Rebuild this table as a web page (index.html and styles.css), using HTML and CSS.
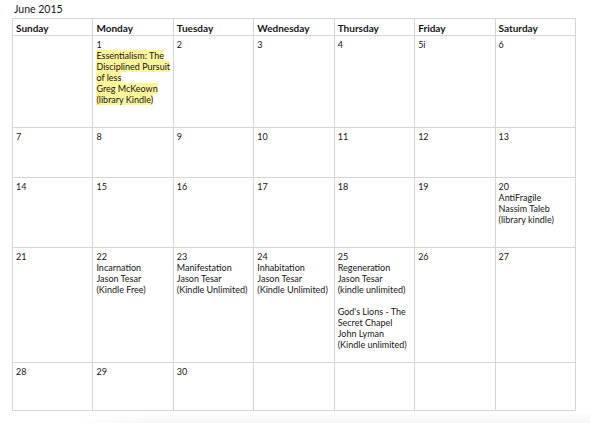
FILE: index.html
```html
<!DOCTYPE html>
<html>
<head>
<meta charset="utf-8">
<link rel="stylesheet" href="styles.css">
</head>
<body>
<div class="page">
  <div class="title">June 2015</div>
  <div class="cal">
    <div class="cell head">Sunday</div>
    <div class="cell head">Monday</div>
    <div class="cell head">Tuesday</div>
    <div class="cell head">Wednesday</div>
    <div class="cell head">Thursday</div>
    <div class="cell head">Friday</div>
    <div class="cell head">Saturday</div>

    <div class="cell"></div>
    <div class="cell">1<br><span class="hl">Essentialism: The</span><br><span class="hl">Disciplined Pursuit</span><br><span class="hl">of less</span><br><span class="hl">Greg McKeown</span><br><span class="hl">(library Kindle)</span></div>
    <div class="cell">2</div>
    <div class="cell">3</div>
    <div class="cell">4</div>
    <div class="cell">5i</div>
    <div class="cell">6</div>

    <div class="cell">7</div>
    <div class="cell">8</div>
    <div class="cell">9</div>
    <div class="cell">10</div>
    <div class="cell">11</div>
    <div class="cell">12</div>
    <div class="cell">13</div>

    <div class="cell">14</div>
    <div class="cell">15</div>
    <div class="cell">16</div>
    <div class="cell">17</div>
    <div class="cell">18</div>
    <div class="cell">19</div>
    <div class="cell">20<br>AntiFragile<br>Nassim Taleb<br>(library kindle)</div>

    <div class="cell">21</div>
    <div class="cell">22<br>Incarnation<br>Jason Tesar<br>(Kindle Free)</div>
    <div class="cell">23<br>Manifestation<br>Jason Tesar<br>(Kindle Unlimited)</div>
    <div class="cell">24<br>Inhabitation<br>Jason Tesar<br>(Kindle Unlimited)</div>
    <div class="cell">25<br>Regeneration<br>Jason Tesar<br>(kindle unlimited)<br><br>God's Lions - The<br>Secret Chapel<br>John Lyman<br>(Kindle unlimited)</div>
    <div class="cell">26</div>
    <div class="cell">27</div>

    <div class="cell">28</div>
    <div class="cell">29</div>
    <div class="cell">30</div>
    <div class="cell"></div>
    <div class="cell"></div>
    <div class="cell"></div>
    <div class="cell"></div>
  </div>
  <div class="shade"></div>
</div>
</body>
</html>
```

FILE: styles.css
```css
html, body {
  margin: 0;
  padding: 0;
  background: #ffffff;
}
body {
  font-family: Lato, "Open Sans", sans-serif;
  color: #161616;
}
.page {
  width: 590px;
  height: 423px;
  overflow: hidden;
}
.title {
  height: 18px;
  box-sizing: border-box;
  padding: 3px 0 0 14px;
  font-size: 10.5px;
  line-height: 13px;
}
.cal {
  margin-left: 12px;
  width: 564px;
  box-sizing: border-box;
  border-top: 1px solid #d6d6d6;
  border-left: 1px solid #d6d6d6;
  display: grid;
  grid-template-columns: repeat(7, 1fr);
  grid-template-rows: 17px 92px 50px 70px 115px 48px;
}
.cell {
  box-sizing: border-box;
  border-right: 1px solid #d6d6d6;
  border-bottom: 1px solid #d6d6d6;
  padding: 3px 3px 0 3px;
  font-size: 9px;
  line-height: 11px;
  white-space: nowrap;
  overflow: hidden;
}
.head {
  font-weight: bold;
  font-size: 10px;
  line-height: 12px;
  padding-top: 3px;
}
.hl {
  background: #fdf59c;
}
.shade {
  height: 12px;
  margin: 1px 0 0 80px;
  background:
    linear-gradient(to right, #ffffff, rgba(255, 255, 255, 0) 80px),
    linear-gradient(to bottom, #ffffff, #f3f3f3);
}
```
